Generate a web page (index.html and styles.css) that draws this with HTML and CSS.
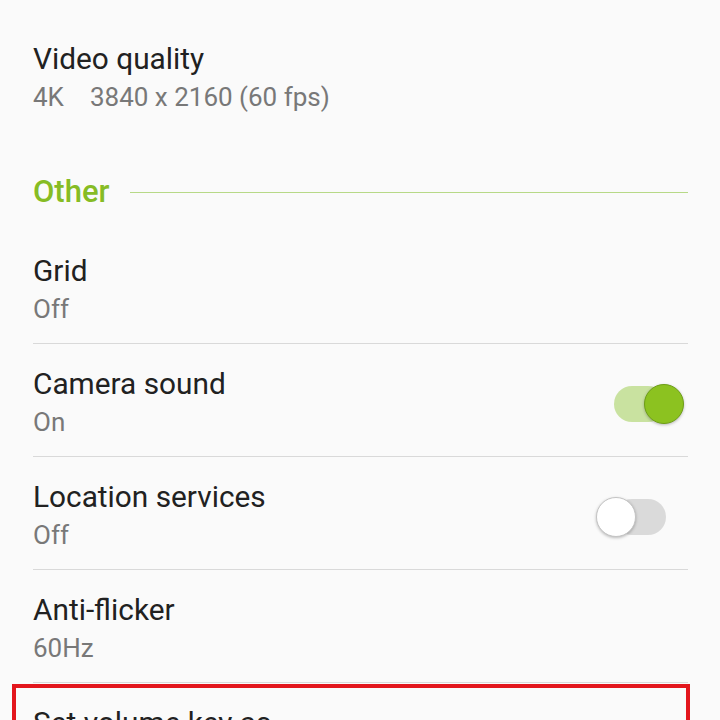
FILE: index.html
```html
<!DOCTYPE html>
<html lang="en">

<head>
    <meta charset="UTF-8">
    <meta name="viewport" content="width=device-width, initial-scale=1.0">
    <title>Camera settings</title>
    <link rel="stylesheet" href="styles.css">
</head>

<body>
    <div class="settings">
        <div class="item first">
            <div class="item-text">
                <div class="item-title">Video quality</div>
                <div class="item-sub"><span class="res-tag">4K</span>3840 x 2160 (60 fps)</div>
            </div>
        </div>

        <div class="section-head">
            <span class="section-name">Other</span>
            <span class="section-line"></span>
        </div>

        <div class="item">
            <div class="item-text">
                <div class="item-title">Grid</div>
                <div class="item-sub">Off</div>
            </div>
        </div>

        <div class="item">
            <div class="item-text">
                <div class="item-title">Camera sound</div>
                <div class="item-sub">On</div>
            </div>
            <div class="switch on"><span class="knob"></span></div>
        </div>

        <div class="item">
            <div class="item-text">
                <div class="item-title">Location services</div>
                <div class="item-sub">Off</div>
            </div>
            <div class="switch"><span class="knob"></span></div>
        </div>

        <div class="item">
            <div class="item-text">
                <div class="item-title">Anti-flicker</div>
                <div class="item-sub">60Hz</div>
            </div>
        </div>

        <!-- highlighted row -->
        <div class="item marked">
            <div class="item-text">
                <div class="item-title">Set volume key as</div>
                <div class="item-sub">Take pictures</div>
            </div>
        </div>
    </div>
</body>

</html>
```

FILE: styles.css
```css
* {
    padding: 0;
    margin: 0;
    box-sizing: border-box;
}

html,
body {
    height: 100%;
    overflow: hidden;
}

body {
    background: #fafafa;
    font-family: Roboto, "Liberation Sans", sans-serif;
}

.settings {
    padding: 0 32px 0 33px;
}

.item {
    display: flex;
    align-items: center;
    padding: 22px 0 14px;
    border-bottom: 1px solid #d9d9d9;
}

.item.first {
    padding-top: 41px;
    border-bottom: none;
}

.item-text {
    flex: 1;
}

.item-title {
    font-size: 29.8px;
    line-height: 36px;
    color: #212121;
}

.item-sub {
    font-size: 26px;
    line-height: 40px;
    color: #787878;
}

.res-tag {
    display: inline-block;
    margin-right: 26px;
}

.section-head {
    display: flex;
    align-items: center;
    padding: 41px 0 19px;
}

.section-name {
    font-size: 31px;
    line-height: 40px;
    font-weight: 500;
    color: #86bc24;
}

.section-line {
    flex: 1;
    height: 1px;
    margin: 0 0 0 21px;
    background: #b7d987;
}

.switch {
    position: relative;
    width: 52px;
    height: 36px;
    margin-right: 22px;
    border-radius: 18px;
    background: #dadada;
}

.switch.on {
    background: #c9e2a0;
}

.knob {
    position: absolute;
    top: -2px;
    left: -18px;
    width: 40px;
    height: 40px;
    border-radius: 50%;
    background: #ffffff;
    border: 1px solid #c4c4c4;
    box-shadow: 0 1px 3px rgba(0, 0, 0, .25);
}

.switch.on .knob {
    left: 30px;
    background: #8cc220;
    border-color: #6e9e17;
}

.marked {
    margin: 1px -2px 0 -21px;
    padding: 17px 0 0 17px;
    border: 4px solid #e3161c;
}
```
